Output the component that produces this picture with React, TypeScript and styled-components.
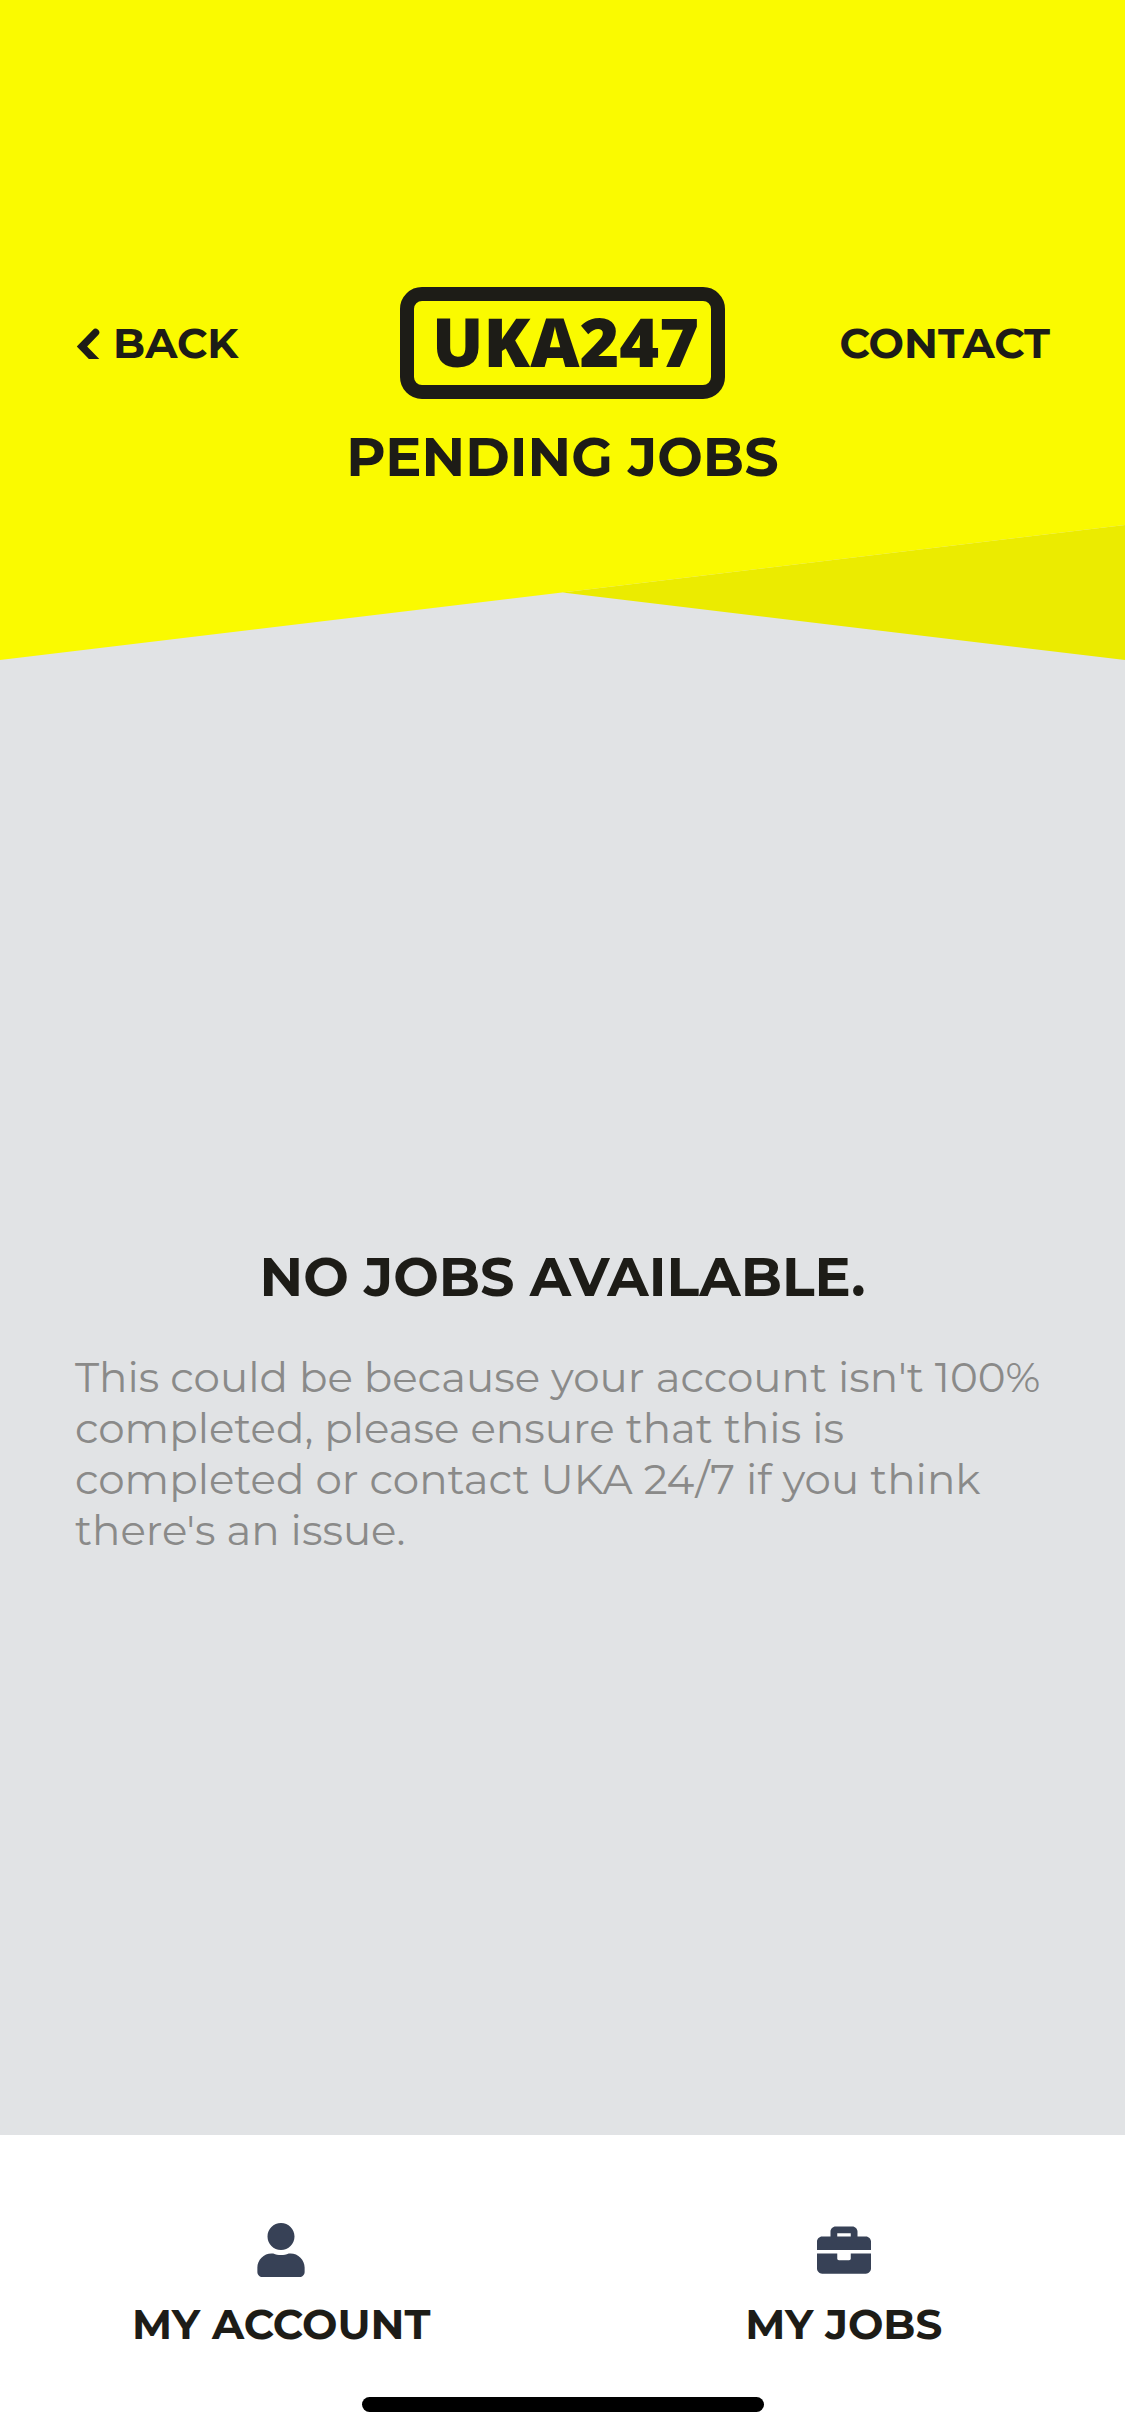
import React from "react";
import styled, { createGlobalStyle } from "styled-components";
import { FaBriefcase, FaUser } from "react-icons/fa";

const ink = "#1d1c17";
const yellow = "#fafa00";
const shade = "#ebeb00";

const GlobalStyle = createGlobalStyle`
  *, *::before, *::after { box-sizing: border-box; }
  body { margin: 0; background: #fff; }
`;

const Page = styled.div`
  display: flex;
  flex-direction: column;
  min-height: 100vh;
  background: #e1e3e5;
  color: ${ink};
  font-family: Montserrat, Inter, "Liberation Sans", sans-serif;
`;

const Header = styled.header`
  display: flex;
  flex-direction: column;
`;

const HeaderBody = styled.div`
  display: flex;
  flex-direction: column;
  gap: 25px;
  padding: 287px 75px 35px;
  background: ${yellow};
`;

const TopBar = styled.div`
  display: grid;
  grid-template-columns: 1fr auto 1fr;
  align-items: center;
`;

const TextButton = styled.button<{ $align: "start" | "end" }>`
  display: flex;
  align-items: center;
  gap: 12px;
  justify-self: ${(p) => p.$align};
  padding: 0;
  border: 0;
  background: none;
  color: inherit;
  font: inherit;
  font-size: 42px;
  font-weight: 700;
  line-height: 52px;
  cursor: pointer;
`;

const Logo = styled.div`
  display: flex;
  align-items: center;
  justify-content: center;
  width: 325px;
  height: 112px;
  padding: 0 0 4px 6px;
  border: 14px solid ${ink};
  border-radius: 22px;
  font-family: "Open Sans", sans-serif;
  font-size: 68px;
  font-weight: 800;
  line-height: 80px;
`;

const Heading = styled.h1`
  margin: 0;
  font-size: 54px;
  font-weight: 700;
  line-height: 66px;
  text-align: center;
`;

const Slant = styled.div`
  position: relative;
  height: 135px;

  &::before,
  &::after {
    content: "";
    position: absolute;
    inset: 0;
  }
  &::before {
    background: ${shade};
    clip-path: polygon(50% 50%, 100% 0, 100% 100%);
  }
  &::after {
    background: ${yellow};
    clip-path: polygon(0 0, 100% 0, 0 100%);
  }
`;

const Main = styled.main`
  flex: 1;
  display: flex;
  flex-direction: column;
  justify-content: center;
  gap: 42px;
  padding: 5px 75px 0;
`;

const Message = styled.p`
  margin: 0;
  color: #8a8a89;
  font-size: 42px;
  font-weight: 400;
  line-height: 51px;
`;

const Footer = styled.footer`
  display: flex;
  flex-direction: column;
  align-items: center;
  gap: 47px;
  padding: 88px 0 24px;
  background: #fff;
`;

const Tabs = styled.nav`
  display: grid;
  grid-template-columns: 1fr 1fr;
  width: 100%;
`;

const Tab = styled.button`
  display: flex;
  flex-direction: column;
  align-items: center;
  gap: 21px;
  padding: 0;
  border: 0;
  background: none;
  color: inherit;
  font: inherit;
  font-size: 42px;
  font-weight: 700;
  line-height: 52px;
  cursor: pointer;

  svg {
    color: #374156;
  }
`;

const HomeIndicator = styled.div`
  width: 402px;
  height: 15px;
  border-radius: 8px;
  background: #000;
`;

const BackIcon = () => (
  <svg width="26" height="32" viewBox="0 0 26 32" aria-hidden="true">
    <path
      d="M20.5 5.5 L7 19.5 L22 35"
      fill="none"
      stroke={ink}
      strokeWidth="7.5"
      strokeLinecap="round"
      strokeLinejoin="miter"
    />
  </svg>
);

export default function App() {
  return (
    <>
      <GlobalStyle />
      <Page>
        <Header>
          <HeaderBody>
            <TopBar>
              <TextButton type="button" $align="start">
                <BackIcon />
                BACK
              </TextButton>
              <Logo>UKA247</Logo>
              <TextButton type="button" $align="end">
                CONTACT
              </TextButton>
            </TopBar>
            <Heading>PENDING JOBS</Heading>
          </HeaderBody>
          <Slant />
        </Header>
        <Main>
          <Heading as="h2">NO JOBS AVAILABLE.</Heading>
          <Message>
            This could be because your account isn't 100% completed, please
            ensure that this is completed or contact UKA 24/7 if you think
            there's an issue.
          </Message>
        </Main>
        <Footer>
          <Tabs>
            <Tab type="button">
              <FaUser size={54} aria-hidden="true" />
              MY ACCOUNT
            </Tab>
            <Tab type="button">
              <FaBriefcase size={54} aria-hidden="true" />
              MY JOBS
            </Tab>
          </Tabs>
          <HomeIndicator />
        </Footer>
      </Page>
    </>
  );
}
